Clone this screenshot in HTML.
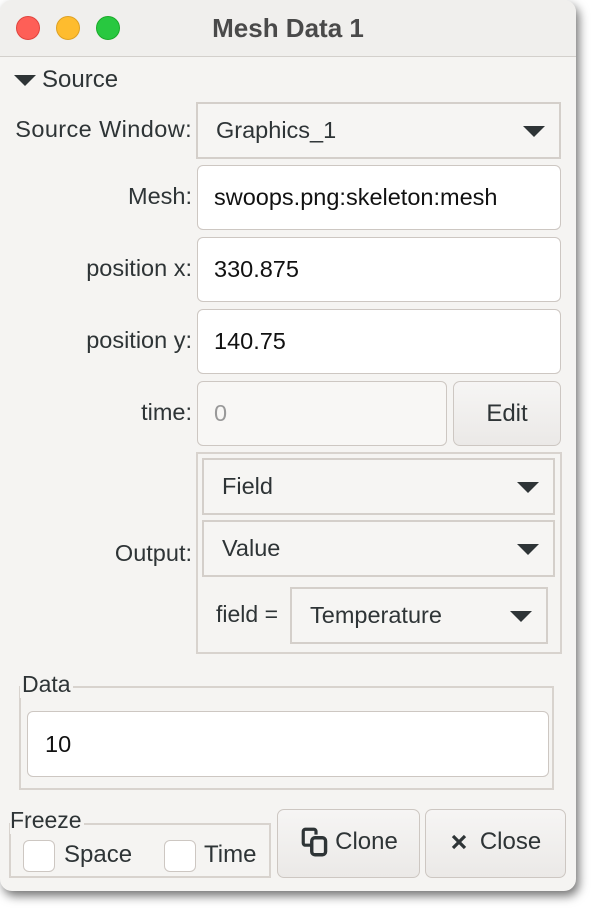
<!DOCTYPE html>
<html><head><style>
body{margin:0;width:596px;height:912px;background:#fff;font-family:"Liberation Sans",sans-serif;position:relative;overflow:hidden;color:#2e3436}
.win{position:absolute;left:0;top:0;width:576px;height:891px;background:#f5f4f2;border-radius:12px;box-shadow:3px 5px 10px rgba(0,0,0,.55);overflow:hidden}
.tb{position:absolute;left:0;top:0;width:576px;height:56px;background:#f0efed;border-bottom:1px solid #d3d0cc}
.dot{position:absolute;top:16px;width:24px;height:24px;border-radius:50%}
.a{position:absolute}
.lbl{position:absolute;font-size:23.5px;color:#2e3436;text-align:right;white-space:nowrap}
.inp{position:absolute;background:#fff;border:1px solid #cdc7c2;border-radius:6px;box-sizing:border-box;font-size:23.5px;color:#111;padding-left:16px;display:flex;align-items:center}
.cb{position:absolute;background:#f6f5f3;border:2px solid #d4cfca;box-sizing:border-box;font-size:23.5px;display:flex;align-items:center;padding-left:18px}
.tri{position:absolute;right:14px;top:50%;margin-top:-5px;width:0;height:0;border-left:11px solid transparent;border-right:11px solid transparent;border-top:11px solid #2e3436}
.btn{position:absolute;background:linear-gradient(#f6f5f4,#ebe9e7);border:1px solid #cdc7c2;border-radius:7px;box-sizing:border-box;font-size:24px;display:flex;align-items:center;justify-content:center;color:#2e3436}
.grp{position:absolute;border:2px solid #d8d3ce;box-sizing:border-box}
.chk{position:absolute;width:32px;height:32px;border:1px solid #cdc7c2;border-radius:6px;background:#fff;box-sizing:border-box}
</style></head><body>
<div class="win">
<div class="tb">
<div class="dot" style="left:16px;background:#fe5f57;border:1px solid #e0443e;box-sizing:border-box"></div>
<div class="dot" style="left:56px;background:#febc2e;border:1px solid #dea123;box-sizing:border-box"></div>
<div class="dot" style="left:96px;background:#28c840;border:1px solid #1aab29;box-sizing:border-box"></div>
<div class="a" style="left:0;width:576px;top:13px;text-align:center;font-weight:bold;font-size:26px;color:#4a4a4a">Mesh Data 1</div>
</div>
<div class="a" style="left:14px;top:75px;width:0;height:0;border-left:11px solid transparent;border-right:11px solid transparent;border-top:11px solid #2e3436"></div>
<div class="a" style="left:42px;top:66px;font-size:24px">Source</div>

<div class="lbl" style="right:384px;top:116px;letter-spacing:0.4px">Source Window:</div>
<div class="cb" style="left:196px;top:102px;width:365px;height:57px">Graphics_1<div class="tri"></div></div>

<div class="lbl" style="right:384px;top:183px">Mesh:</div>
<div class="inp" style="left:197px;top:165px;width:364px;height:65px">swoops.png:skeleton:mesh</div>

<div class="lbl" style="right:384px;top:255px">position x:</div>
<div class="inp" style="left:197px;top:237px;width:364px;height:65px">330.875</div>

<div class="lbl" style="right:384px;top:327px">position y:</div>
<div class="inp" style="left:197px;top:309px;width:364px;height:65px">140.75</div>

<div class="lbl" style="right:384px;top:399px">time:</div>
<div class="inp" style="left:197px;top:381px;width:250px;height:65px;background:#f8f7f5;color:#999">0</div>
<div class="btn" style="left:453px;top:381px;width:108px;height:65px">Edit</div>

<div class="lbl" style="right:384px;top:540px">Output:</div>
<div class="grp" style="left:196px;top:452px;width:366px;height:202px"></div>
<div class="cb" style="left:202px;top:458px;width:353px;height:57px">Field<div class="tri"></div></div>
<div class="cb" style="left:202px;top:520px;width:353px;height:57px">Value<div class="tri"></div></div>
<div class="a" style="left:216px;top:601px;font-size:23px">field =</div>
<div class="cb" style="left:290px;top:587px;width:258px;height:57px">Temperature<div class="tri"></div></div>

<div class="grp" style="left:19px;top:686px;width:535px;height:104px"></div>
<div class="a" style="left:20px;top:671px;font-size:23px;background:#f5f4f2;padding:0 2px">Data</div>
<div class="inp" style="left:27px;top:711px;width:522px;height:66px;padding-left:17px">10</div>

<div class="grp" style="left:9px;top:823px;width:262px;height:55px"></div>
<div class="a" style="left:10px;top:807px;font-size:23px;background:#f5f4f2;padding:0 2px 0 0">Freeze</div>
<div class="chk" style="left:23px;top:840px"></div>
<div class="a" style="left:64px;top:841px;font-size:24px">Space</div>
<div class="chk" style="left:164px;top:840px"></div>
<div class="a" style="left:204px;top:841px;font-size:24px">Time</div>

<div class="btn" style="left:277px;top:809px;width:143px;height:69px;padding-bottom:4px">
<svg width="34" height="34" viewBox="0 0 30 32" style="margin-right:2px"><path d="M10 19H5a2 2 0 0 1-2-2V6a2 2 0 0 1 2-2h8a2 2 0 0 1 2 2v3" fill="none" stroke="#2e3436" stroke-width="3"/><rect x="11" y="12" width="13" height="16" rx="3" fill="none" stroke="#2e3436" stroke-width="3.2"/></svg>Clone</div>
<div class="btn" style="left:425px;top:809px;width:141px;height:69px;padding-bottom:4px">
<svg width="18" height="18" viewBox="0 0 18 18" style="margin-right:12px"><path d="M3 3L15 15M15 3L3 15" stroke="#2e3436" stroke-width="3.2"/></svg>Close</div>
</div>
</body></html>
